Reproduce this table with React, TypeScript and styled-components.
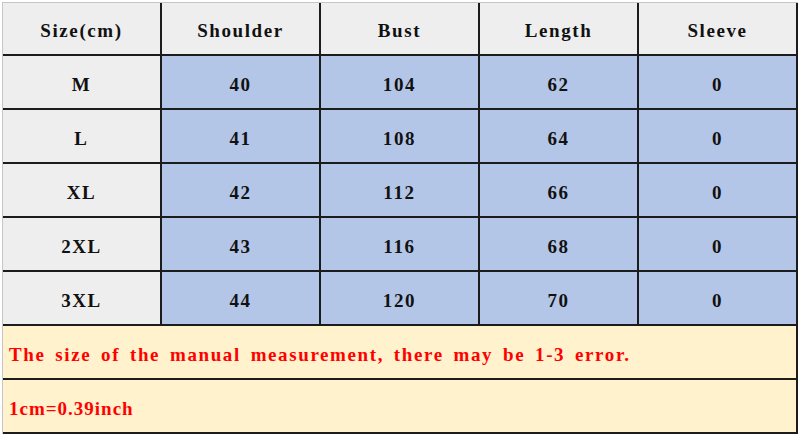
import React from "react";
import styled, { createGlobalStyle } from "styled-components";

const GlobalStyle = createGlobalStyle`
  html, body {
    margin: 0;
    padding: 0;
    background: #ffffff;
  }
  body {
    font-family: "Liberation Serif", "Times New Roman", serif;
  }
`;

const Page = styled.div`
  width: 800px;
  height: 437px;
  padding: 2px 0 0 2px;
  box-sizing: border-box;
  overflow: hidden;
`;

const Sheet = styled.div`
  display: grid;
  grid-template-columns: repeat(5, 159px);
  grid-template-rows: 53px repeat(7, 54px);
  border-top: 1px solid #c6c6c6;
  border-left: 1px solid #c6c6c6;
  width: max-content;
`;

type CellKind = "head" | "label" | "data";

const bgFor: Record<CellKind, string> = {
  head: "#eeeeee",
  label: "#eeeeee",
  data: "#b4c6e7",
};

const Cell = styled.div<{ $kind: CellKind }>`
  box-sizing: border-box;
  display: flex;
  align-items: center;
  justify-content: center;
  background: ${(p) => bgFor[p.$kind]};
  border-right: 2px solid #1c1c1c;
  border-bottom: 2px solid #1c1c1c;
  color: #111111;
  font-family: "Liberation Serif", "Times New Roman", serif;
  font-weight: bold;
  font-size: 19px;
  letter-spacing: 1.6px;
  padding-top: ${(p) => (p.$kind === "head" ? "4px" : "5px")};
`;

const Note = styled.div<{ $spacing: number }>`
  grid-column: 1 / -1;
  box-sizing: border-box;
  display: flex;
  align-items: center;
  padding: 6px 0 0 6px;
  background: #fff2cc;
  border-right: 2px solid #1c1c1c;
  border-bottom: 2px solid #1c1c1c;
  color: #ff0000;
  font-family: "Liberation Serif", "Times New Roman", serif;
  font-weight: bold;
  font-size: 19px;
  letter-spacing: ${(p) => p.$spacing}px;
  word-spacing: 3.5px;
`;

const headers = ["Size(cm)", "Shoulder", "Bust", "Length", "Sleeve"];

const rows: [string, number, number, number, number][] = [
  ["M", 40, 104, 62, 0],
  ["L", 41, 108, 64, 0],
  ["XL", 42, 112, 66, 0],
  ["2XL", 43, 116, 68, 0],
  ["3XL", 44, 120, 70, 0],
];

export default function App() {
  return (
    <>
      <GlobalStyle />
      <Page>
        <Sheet>
          {headers.map((h) => (
            <Cell key={h} $kind="head">
              {h}
            </Cell>
          ))}
          {rows.map(([size, ...vals]) => (
            <React.Fragment key={size}>
              <Cell $kind="label">{size}</Cell>
              {vals.map((v, i) => (
                <Cell key={i} $kind="data">
                  {v}
                </Cell>
              ))}
            </React.Fragment>
          ))}
          <Note $spacing={1.6}>
            The size of the manual measurement, there may be 1-3 error.
          </Note>
          <Note $spacing={1}>1cm=0.39inch</Note>
        </Sheet>
      </Page>
    </>
  );
}
